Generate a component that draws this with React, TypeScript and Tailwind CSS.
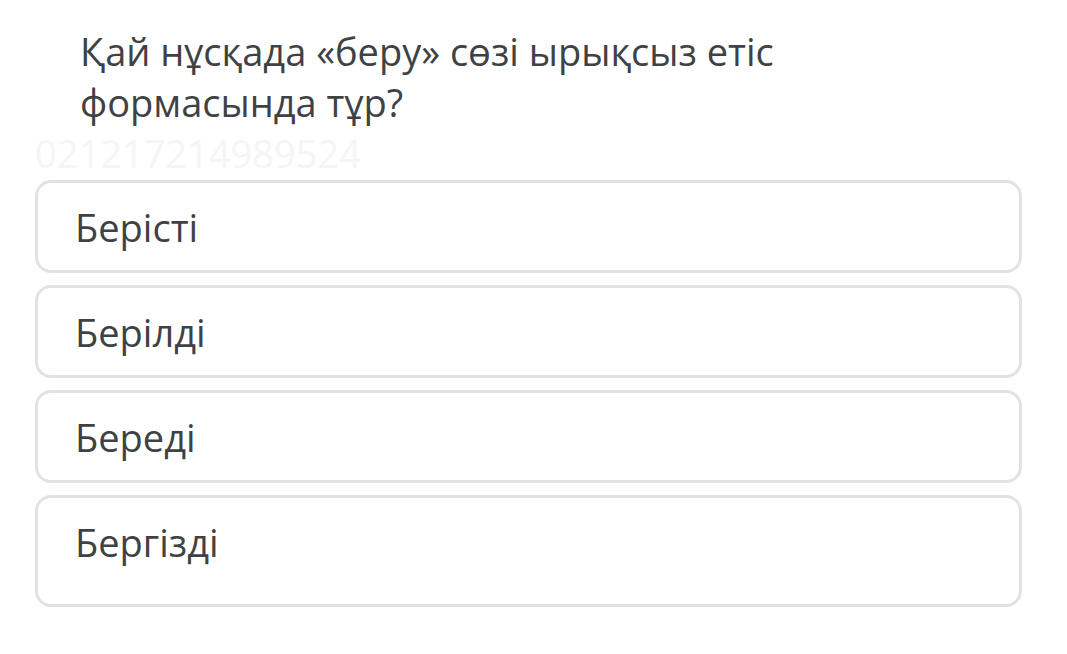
const options = ["Берісті", "Берілді", "Береді", "Бергізді"]

export default function App() {
	return (
		<div className="min-h-[654px] w-[1067px] bg-white font-['Open_Sans',sans-serif] text-[#3f4244]">
			<div className="pt-[26px] pl-[80px] pr-[60px]">
				<h1 className="text-[38px] leading-[51px] font-normal">
					Қай нұсқада «беру» сөзі ырықсыз етіс
					<br />
					формасында тұр?
				</h1>
			</div>
			<div className="mt-[5px] pl-[35px] text-[38px] leading-[40px] text-[#f4f5f5] select-none">021217214989524</div>
			<div className="mt-[7px] flex flex-col gap-[12px] pl-[35px] pr-[45px]">
				{options.map((opt, i) => (
					<div
						key={opt}
						className={`flex items-start rounded-[16px] border-[3px] border-[#e1e3e3] pl-[37px] pt-[19px] ${i === 3 ? "h-[112px]" : "h-[93px]"}`}
					>
						<span className="text-[38px] leading-[50px]">{opt}</span>
					</div>
				))}
			</div>
		</div>
	)
}
